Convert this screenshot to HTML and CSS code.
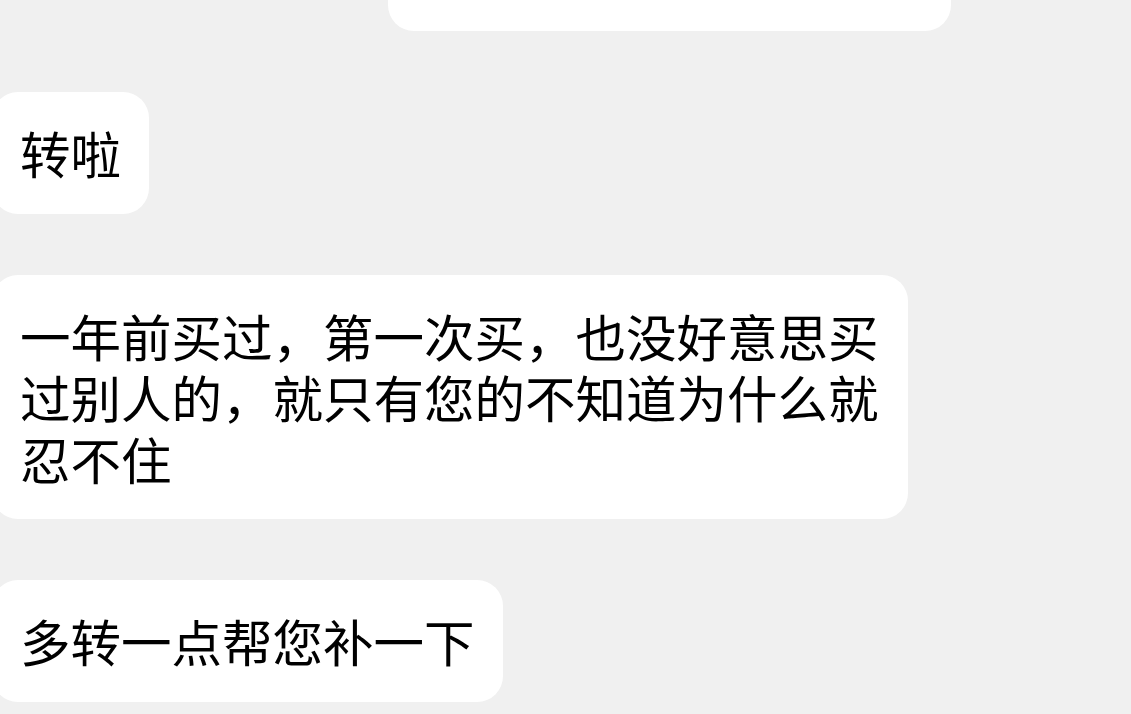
FILE: index.html
```html
<!DOCTYPE html>
<html lang="zh-CN">
<head>
    <meta charset="UTF-8">
    <meta name="viewport" content="width=device-width, initial-scale=1.0">
    <title>聊天</title>
    <link rel="stylesheet" href="styles.css">
</head>
<body>
    <div class="chat">
        <div class="bubble bubble-image"></div>

        <div class="bubble">转啦</div>

        <div class="bubble">一年前买过，第一次买，也没好意思买过别人的，就只有您的不知道为什么就忍不住</div>

        <div class="bubble">多转一点帮您补一下</div>
    </div>
</body>
</html>
```

FILE: styles.css
```css
:root {
    --background: #f0f0f0;
    --bubble-bg: #ffffff;
    --text: #000000;
}

body {
    margin: 0;
    background: var(--background);
    font-family: "Noto Sans CJK SC", "Noto Sans", sans-serif;
    color: var(--text);
    overflow: hidden;
}

.chat {
    display: flex;
    flex-direction: column;
    align-items: flex-start;
    gap: 61px;
}

.bubble {
    background: var(--bubble-bg);
    border-radius: 26px;
    padding: 30px 28px;
    margin-left: -8px;
    font-size: 50.5px;
    line-height: 61.5px;
    max-width: 860px;
}

.bubble-image {
    width: 563px;
    height: 100px;
    padding: 0;
    margin-top: -69px;
    margin-left: 388px;
}
```
